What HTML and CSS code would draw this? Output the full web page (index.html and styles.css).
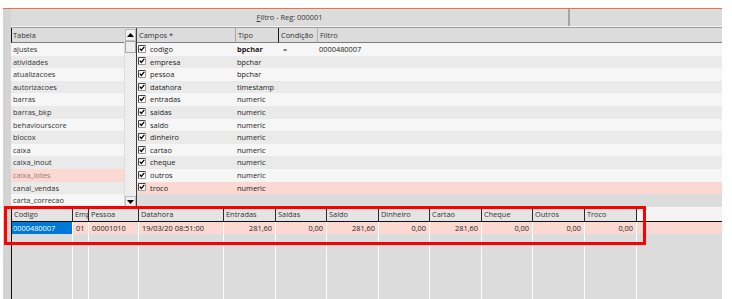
FILE: index.html
```html
<!DOCTYPE html>
<html>
<head>
<meta charset="utf-8">
<link rel="stylesheet" href="styles.css">
</head>
<body>
<div class="window">
  <div class="strip"></div>
  <div class="main">
    <div class="titlebar">
      <div class="title-seg1"><u>F</u>iltro - Reg: 000001</div>
      <div class="title-seg2"></div>
    </div>
    <div class="panels">
      <div class="tabela">
        <div class="hdr tab-hdr">Tabela</div>
        <div class="trow a">ajustes</div>
        <div class="trow b">atividades</div>
        <div class="trow a">atualizacoes</div>
        <div class="trow b">autorizacoes</div>
        <div class="trow a">barras</div>
        <div class="trow b">barras_bkp</div>
        <div class="trow a">behaviourscore</div>
        <div class="trow b">blocox</div>
        <div class="trow a">caixa</div>
        <div class="trow b">caixa_inout</div>
        <div class="trow pink dim">caixa_lotes</div>
        <div class="trow b">canal_vendas</div>
        <div class="trow a">carta_correcao</div>
      </div>
      <div class="scroll">
        <div class="sbtn up"><svg width="7" height="4" viewBox="0 0 7 4"><path d="M0 4 L3.5 0 L7 4 Z" fill="#000"/></svg></div>
        <div class="thumb"></div>
        <div class="track"></div>
        <div class="sbtn down"><svg width="7" height="4" viewBox="0 0 7 4"><path d="M0 0 L3.5 4 L7 0 Z" fill="#000"/></svg></div>
      </div>
      <div class="campos">
        <div class="crow chdr">
          <div class="hdr h1">Campos *</div>
          <div class="hdr h2">Tipo</div>
          <div class="hdr h3">Condição</div>
          <div class="hdr h4">Filtro</div>
        </div>
        <div class="crow a"><div class="cc"><span class="chk"><svg width="8" height="8" viewBox="0 0 8 8"><path d="M0.5 7.5 V0.5 H7.5" stroke="#444" fill="none"/><path d="M7.5 0.5 V7.5 H0.5" stroke="#999" fill="none"/><rect x="1" y="1" width="6" height="6" fill="#fff"/><path d="M1.8 3.6 L3.3 5.4 L6.3 1.9" stroke="#000" stroke-width="1.3" fill="none"/></svg></span>codigo</div><div class="tc bold">bpchar</div><div class="tc cond">=</div><div class="tc">0000480007</div></div>
        <div class="crow b"><div class="cc"><span class="chk"><svg width="8" height="8" viewBox="0 0 8 8"><path d="M0.5 7.5 V0.5 H7.5" stroke="#444" fill="none"/><path d="M7.5 0.5 V7.5 H0.5" stroke="#999" fill="none"/><rect x="1" y="1" width="6" height="6" fill="#fff"/><path d="M1.8 3.6 L3.3 5.4 L6.3 1.9" stroke="#000" stroke-width="1.3" fill="none"/></svg></span>empresa</div><div class="tc">bpchar</div><div class="tc"></div><div class="tc"></div></div>
        <div class="crow a"><div class="cc"><span class="chk"><svg width="8" height="8" viewBox="0 0 8 8"><path d="M0.5 7.5 V0.5 H7.5" stroke="#444" fill="none"/><path d="M7.5 0.5 V7.5 H0.5" stroke="#999" fill="none"/><rect x="1" y="1" width="6" height="6" fill="#fff"/><path d="M1.8 3.6 L3.3 5.4 L6.3 1.9" stroke="#000" stroke-width="1.3" fill="none"/></svg></span>pessoa</div><div class="tc">bpchar</div><div class="tc"></div><div class="tc"></div></div>
        <div class="crow b"><div class="cc"><span class="chk"><svg width="8" height="8" viewBox="0 0 8 8"><path d="M0.5 7.5 V0.5 H7.5" stroke="#444" fill="none"/><path d="M7.5 0.5 V7.5 H0.5" stroke="#999" fill="none"/><rect x="1" y="1" width="6" height="6" fill="#fff"/><path d="M1.8 3.6 L3.3 5.4 L6.3 1.9" stroke="#000" stroke-width="1.3" fill="none"/></svg></span>datahora</div><div class="tc">timestamp</div><div class="tc"></div><div class="tc"></div></div>
        <div class="crow a"><div class="cc"><span class="chk"><svg width="8" height="8" viewBox="0 0 8 8"><path d="M0.5 7.5 V0.5 H7.5" stroke="#444" fill="none"/><path d="M7.5 0.5 V7.5 H0.5" stroke="#999" fill="none"/><rect x="1" y="1" width="6" height="6" fill="#fff"/><path d="M1.8 3.6 L3.3 5.4 L6.3 1.9" stroke="#000" stroke-width="1.3" fill="none"/></svg></span>entradas</div><div class="tc">numeric</div><div class="tc"></div><div class="tc"></div></div>
        <div class="crow b"><div class="cc"><span class="chk"><svg width="8" height="8" viewBox="0 0 8 8"><path d="M0.5 7.5 V0.5 H7.5" stroke="#444" fill="none"/><path d="M7.5 0.5 V7.5 H0.5" stroke="#999" fill="none"/><rect x="1" y="1" width="6" height="6" fill="#fff"/><path d="M1.8 3.6 L3.3 5.4 L6.3 1.9" stroke="#000" stroke-width="1.3" fill="none"/></svg></span>saidas</div><div class="tc">numeric</div><div class="tc"></div><div class="tc"></div></div>
        <div class="crow a"><div class="cc"><span class="chk"><svg width="8" height="8" viewBox="0 0 8 8"><path d="M0.5 7.5 V0.5 H7.5" stroke="#444" fill="none"/><path d="M7.5 0.5 V7.5 H0.5" stroke="#999" fill="none"/><rect x="1" y="1" width="6" height="6" fill="#fff"/><path d="M1.8 3.6 L3.3 5.4 L6.3 1.9" stroke="#000" stroke-width="1.3" fill="none"/></svg></span>saldo</div><div class="tc">numeric</div><div class="tc"></div><div class="tc"></div></div>
        <div class="crow b"><div class="cc"><span class="chk"><svg width="8" height="8" viewBox="0 0 8 8"><path d="M0.5 7.5 V0.5 H7.5" stroke="#444" fill="none"/><path d="M7.5 0.5 V7.5 H0.5" stroke="#999" fill="none"/><rect x="1" y="1" width="6" height="6" fill="#fff"/><path d="M1.8 3.6 L3.3 5.4 L6.3 1.9" stroke="#000" stroke-width="1.3" fill="none"/></svg></span>dinheiro</div><div class="tc">numeric</div><div class="tc"></div><div class="tc"></div></div>
        <div class="crow a"><div class="cc"><span class="chk"><svg width="8" height="8" viewBox="0 0 8 8"><path d="M0.5 7.5 V0.5 H7.5" stroke="#444" fill="none"/><path d="M7.5 0.5 V7.5 H0.5" stroke="#999" fill="none"/><rect x="1" y="1" width="6" height="6" fill="#fff"/><path d="M1.8 3.6 L3.3 5.4 L6.3 1.9" stroke="#000" stroke-width="1.3" fill="none"/></svg></span>cartao</div><div class="tc">numeric</div><div class="tc"></div><div class="tc"></div></div>
        <div class="crow b"><div class="cc"><span class="chk"><svg width="8" height="8" viewBox="0 0 8 8"><path d="M0.5 7.5 V0.5 H7.5" stroke="#444" fill="none"/><path d="M7.5 0.5 V7.5 H0.5" stroke="#999" fill="none"/><rect x="1" y="1" width="6" height="6" fill="#fff"/><path d="M1.8 3.6 L3.3 5.4 L6.3 1.9" stroke="#000" stroke-width="1.3" fill="none"/></svg></span>cheque</div><div class="tc">numeric</div><div class="tc"></div><div class="tc"></div></div>
        <div class="crow a"><div class="cc"><span class="chk"><svg width="8" height="8" viewBox="0 0 8 8"><path d="M0.5 7.5 V0.5 H7.5" stroke="#444" fill="none"/><path d="M7.5 0.5 V7.5 H0.5" stroke="#999" fill="none"/><rect x="1" y="1" width="6" height="6" fill="#fff"/><path d="M1.8 3.6 L3.3 5.4 L6.3 1.9" stroke="#000" stroke-width="1.3" fill="none"/></svg></span>outros</div><div class="tc">numeric</div><div class="tc"></div><div class="tc"></div></div>
        <div class="crow pink"><div class="cc"><span class="chk"><svg width="8" height="8" viewBox="0 0 8 8"><path d="M0.5 7.5 V0.5 H7.5" stroke="#444" fill="none"/><path d="M7.5 0.5 V7.5 H0.5" stroke="#999" fill="none"/><rect x="1" y="1" width="6" height="6" fill="#fff"/><path d="M1.8 3.6 L3.3 5.4 L6.3 1.9" stroke="#000" stroke-width="1.3" fill="none"/></svg></span>troco</div><div class="tc">numeric</div><div class="tc"></div><div class="tc"></div></div>
      </div>
    </div>
    <div class="grid">
      <div class="gh">Codigo</div>
      <div class="gh">Emp</div>
      <div class="gh">Pessoa</div>
      <div class="gh">Datahora</div>
      <div class="gh">Entradas</div>
      <div class="gh">Saidas</div>
      <div class="gh">Saldo</div>
      <div class="gh">Dinheiro</div>
      <div class="gh">Cartao</div>
      <div class="gh">Cheque</div>
      <div class="gh">Outros</div>
      <div class="gh">Troco</div>
      <div class="gh last"></div>

      <div class="gd sel">0000480007</div>
      <div class="gd">01</div>
      <div class="gd">00001010</div>
      <div class="gd">19/03/20 08:51:00</div>
      <div class="gd num">281,60</div>
      <div class="gd num">0,00</div>
      <div class="gd num">281,60</div>
      <div class="gd num">0,00</div>
      <div class="gd num">281,60</div>
      <div class="gd num">0,00</div>
      <div class="gd num">0,00</div>
      <div class="gd num">0,00</div>
      <div class="gd last"></div>

      <div class="gf"></div><div class="gf"></div><div class="gf"></div><div class="gf"></div>
      <div class="gf"></div><div class="gf"></div><div class="gf"></div><div class="gf"></div>
      <div class="gf"></div><div class="gf"></div><div class="gf"></div><div class="gf"></div>
      <div class="gf last"></div>
    </div>
  </div>
  <div class="mark"></div>
</div>
</body>
</html>
```
FILE: styles.css
```css
* { box-sizing: border-box; }
html, body { margin: 0; padding: 0; background: #fff; }
body {
  font-family: "Open Sans", "Noto Sans", sans-serif;
  font-size: 7.4px;
  color: #222;
  width: 732px;
  height: 299px;
  overflow: hidden;
}
.window {
  position: relative;
  margin: 8px 0 0 3px;
  width: 719px;
  height: 291px;
  border-top: 1px solid #e8704f;
  display: flex;
}
.strip {
  width: 8px;
  background: #d4d4d4;
  flex: none;
}
.main {
  flex: 1;
  display: flex;
  flex-direction: column;
  min-width: 0;
}
.titlebar {
  height: 18px;
  display: flex;
  background: #dcdcdc;
  border-bottom: 1px solid #f2f2f2;
  flex: none;
}
.title-seg1 {
  width: 559px;
  text-align: center;
  line-height: 17px;
  color: #333;
  border-right: 2px solid #a4a4a4;
  padding-left: 0;
}
.title-seg2 { flex: 1; }

.panels {
  height: 180px;
  border-top: 1px solid #a0a0a0;
  display: flex;
  flex: none;
  background: #dcdcdc;
}
.hdr {
  height: 15px;
  line-height: 14px;
  background: #dcdcdc;
  border-bottom: 1px solid #7c7c7c;
  color: #333;
  padding-left: 2px;
  white-space: nowrap;
}
.tabela {
  width: 113px;
  flex: none;
  display: flex;
  flex-direction: column;
}
.tab-hdr { border-left: 1px solid #111; padding-left: 1px; }
.trow {
  height: 12.6px;
  line-height: 12.6px;
  padding-left: 2px;
  white-space: nowrap;
  color: #333;
}
.a { background: #f6f6f6; }
.b { background: #eaeaea; }
.pink { background: #fbd8d1; }
.dim { color: #957a7a; }

.scroll {
  width: 13px;
  flex: none;
  display: flex;
  flex-direction: column;
  border-right: 1px solid #3c3c3c;
  padding-left: 1px;
}
.sbtn {
  height: 12px;
  background: #f0f0f0;
  border: 1px solid #bdbdbd;
  display: flex;
  align-items: center;
  justify-content: center;
  flex: none;
}
.sbtn.up { margin-top: 1px; height: 12px; }
.thumb {
  height: 12px;
  background: #eeeeee;
  border: 1px solid #a9a9a9;
  flex: none;
}
.track {
  flex: 1;
  background: repeating-conic-gradient(#f7f7f7 0 25%, #e4e4e4 0 50%) 0 0 / 2px 2px;
}
.sbtn.down { height: 11px; }

.campos {
  flex: 1;
  display: flex;
  flex-direction: column;
}
.crow {
  display: grid;
  grid-template-columns: 99px 43px 39px 1fr;
  height: 12.6px;
  line-height: 12.6px;
  white-space: nowrap;
}
.chdr { height: 15px; line-height: 14px; }
.h1 { border-right: 1px solid #a8a8a8; }
.h2 { border-right: 1px solid #1a1a1a; }
.h3 { border-right: 1px solid #b0b0b0; }
.cc {
  display: flex;
  align-items: center;
  padding-left: 1px;
}
.chk {
  width: 8px;
  height: 8px;
  margin-right: 4px;
  display: block;
  margin-top: -1px;
}
.chk svg { display: block; }
.tc { padding-left: 1px; }
.tc.cond { padding-left: 4px; }
.bold { font-weight: 700; }

.grid {
  flex: 1;
  display: grid;
  grid-template-columns: 61px 16px 50px 85px 52px 51px 52px 51px 52px 51px 52px 52px 1fr;
  grid-template-rows: 15px 12px 1fr;
  border-left: 1px solid #111;
  background: #dcdcdc;
}
.gh {
  background: #e4e4e4;
  border-top: 1px solid #f8f8f8;
  border-bottom: 1px solid #111;
  border-right: 1px solid #2a2a2a;
  line-height: 13px;
  padding-left: 2px;
  color: #333;
  white-space: nowrap;
  overflow: hidden;
}
.gh.last { border-right: none; background: #f3f3f3; }
.gd {
  background: #fbd8d1;
  border-right: 1px solid #fff;
  line-height: 12px;
  padding: 0 3px;
  white-space: nowrap;
  overflow: hidden;
}
.gd.num { text-align: right; }
.gd.sel { background: #0078d7; color: #fff; padding-left: 1px; }
.gd.last { border-right: none; }
.gf { border-right: 1px solid #fafafa; }
.gf.last { border-right: none; }

.mark {
  position: absolute;
  left: 1px;
  top: 197px;
  width: 642px;
  height: 39px;
  border: 3px solid #f00;
  pointer-events: none;
}
```
